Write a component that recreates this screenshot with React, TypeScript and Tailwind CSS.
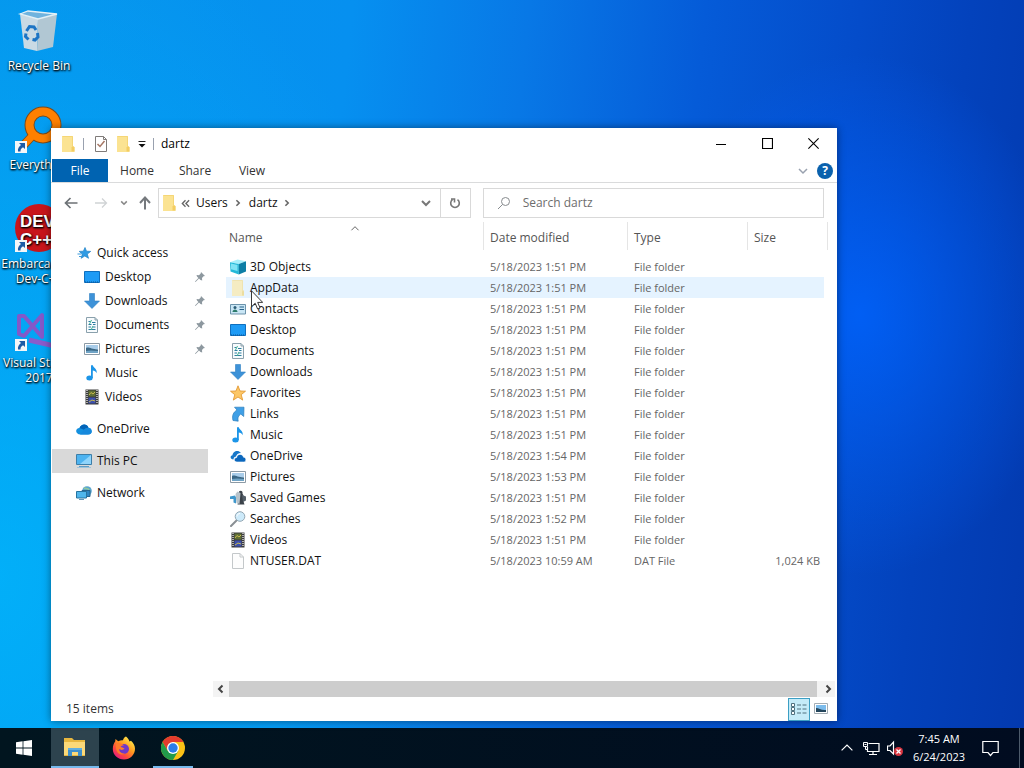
import type { ReactNode } from "react";

type IconName =
  | "folder"
  | "folderFaded"
  | "cube"
  | "contacts"
  | "desktop"
  | "documents"
  | "downloads"
  | "favorites"
  | "links"
  | "music"
  | "onedrive"
  | "onedriveOld"
  | "pictures"
  | "games"
  | "searches"
  | "videos"
  | "file"
  | "quick"
  | "pc"
  | "network";

type FileRow = {
  name: string;
  icon: IconName;
  date: string;
  type?: string;
  size?: string;
  hovered?: boolean;
};

const files: FileRow[] = [
  { name: "3D Objects", icon: "cube", date: "5/18/2023 1:51 PM" },
  { name: "AppData", icon: "folderFaded", date: "5/18/2023 1:51 PM", hovered: true },
  { name: "Contacts", icon: "contacts", date: "5/18/2023 1:51 PM" },
  { name: "Desktop", icon: "desktop", date: "5/18/2023 1:51 PM" },
  { name: "Documents", icon: "documents", date: "5/18/2023 1:51 PM" },
  { name: "Downloads", icon: "downloads", date: "5/18/2023 1:51 PM" },
  { name: "Favorites", icon: "favorites", date: "5/18/2023 1:51 PM" },
  { name: "Links", icon: "links", date: "5/18/2023 1:51 PM" },
  { name: "Music", icon: "music", date: "5/18/2023 1:51 PM" },
  { name: "OneDrive", icon: "onedriveOld", date: "5/18/2023 1:54 PM" },
  { name: "Pictures", icon: "pictures", date: "5/18/2023 1:53 PM" },
  { name: "Saved Games", icon: "games", date: "5/18/2023 1:51 PM" },
  { name: "Searches", icon: "searches", date: "5/18/2023 1:52 PM" },
  { name: "Videos", icon: "videos", date: "5/18/2023 1:51 PM" },
  { name: "NTUSER.DAT", icon: "file", date: "5/18/2023 10:59 AM", type: "DAT File", size: "1,024 KB" },
];

const pinned: { name: string; icon: IconName; pin?: boolean }[] = [
  { name: "Desktop", icon: "desktop", pin: true },
  { name: "Downloads", icon: "downloads", pin: true },
  { name: "Documents", icon: "documents", pin: true },
  { name: "Pictures", icon: "pictures", pin: true },
  { name: "Music", icon: "music" },
  { name: "Videos", icon: "videos" },
];

const glyphs: Record<IconName, ReactNode> = {
  folder: (
    <>
      <path d="M2 0h11v10l1.500 1v5H2z" fill="#fbe392" />
      <path d="M2.500 .5h10v10" fill="none" stroke="#f5d676" />
      <path d="M11.500 15.500v-4l1.500-1.500 1.500 1.500v4z" fill="#f3cd62" />
    </>
  ),
  folderFaded: (
    <>
      <path d="M2 0h11v10l1 1v5H2z" fill="#f5ecc2" />
      <path d="M2.500 .5h10v10" fill="none" stroke="#efe3b0" />
      <path d="M12 15.500v-4l1-1.500 1 1.500v4z" fill="#ebdda0" />
    </>
  ),
  cube: (
    <>
      <path d="M0 3.200L7.500.5 16 2.200 8.800 5z" fill="#a7effb" />
      <path d="M0 3.200L8.800 5v10.500L.5 12.600z" fill="#22b8d8" />
      <path d="M8.800 5L16 2.200v10.200l-7.200 3.100z" fill="#0c7ea6" />
      <path d="M1 4.500l6.500 1.400v6L1 10.300z" fill="#7fe3f5" />
    </>
  ),
  contacts: (
    <>
      <path d="M.5 3.500h15v9.500H.5z" fill="#c9e6f5" stroke="#6c93ab" />
      <circle cx="5" cy="6.500" r="1.500" fill="#2c5d78" />
      <path d="M2.500 11c0-3.500 5-3.500 5 0z" fill="#2c7a6a" />
      <path d="M9.500 6h4.500M9.500 8.500h4.500" stroke="#27618a" strokeWidth="1.200" />
    </>
  ),
  desktop: (
    <>
      <path d="M.5 2.500h15v11H.5z" fill="#1e9bf5" stroke="#0f6fbe" />
      <path d="M1 13h14" stroke="#0b5796" strokeDasharray="1 1" />
    </>
  ),
  documents: (
    <>
      <path d="M2.500.5h8.500l2.500 2.500v12.500h-11z" fill="#f7fbfd" stroke="#8aa0ac" />
      <path d="M11 .5V3h2.500" fill="none" stroke="#8aa0ac" />
      <path d="M4.500 4.500h2M8 5.500h3.500M4.500 7.500h3M9 7.500h2.500M4.500 10h2.500M8.500 10h3M4.500 12.500h7" stroke="#2e7fa0" strokeWidth="1.200" />
      <path d="M7.500 3L5.500 7M9 9l-2 4" stroke="#46b395" />
    </>
  ),
  downloads: <path d="M5.500.5h5V8h5L8 15.500.5 8h5z" fill="#3d92d8" stroke="#2f7fc2" strokeWidth=".6" />,
  favorites: (
    <path
      d="M8 .8l2 5.200 5.500.2-4.300 3.500 1.500 5.400L8 12l-4.700 3.100 1.500-5.400L.5 6.200 6 6z"
      fill="#fcc767"
      stroke="#e39a35"
      strokeWidth=".9"
    />
  ),
  links: (
    <path
      d="M4.500 1.200h9.500l-.3 9.300-2.900-2.500c-2.800 2-3.300 4-2.600 7.200L3 14.500C1.800 9.500 3.300 6.200 7 4z"
      fill="#3f9fe6"
      stroke="#2a7cbc"
      strokeWidth=".7"
    />
  ),
  music: (
    <>
      <ellipse cx="5.500" cy="13" rx="3.200" ry="2.500" fill="#1c95e8" />
      <path d="M7 .3h1.900c.3 2.500 4.700 3.700 3.700 8-.7-2-2.200-2.600-3.800-2.800V13H7z" fill="#1c95e8" />
    </>
  ),
  onedrive: (
    <>
      <path d="M4.500 13.500C-1 13.500-1.200 7.200 3.500 7c1.500-4.500 7.500-4.800 9-.2 4.500.3 4.500 6.700-.5 6.700z" fill="#1490df" />
      <path d="M3.500 7c1.500-4.500 7.500-4.800 9-.2-2-.2-3.500 1-4.500 2z" fill="#0364b8" />
      <path d="M8 8.800c2-2.600 6-2.500 7.300.6 1 2-.3 4.100-3.300 4.100H4z" fill="#1688dc" />
    </>
  ),
  onedriveOld: (
    <>
      <path d="M3.500 11.500C0 11.500-.3 7.800 2.500 7.300 2.500 3.500 8 .8 11 5c-3 .2-4.500 1.500-5 3.500-1.800.3-2.500 1.500-2.500 3z" fill="#1777c9" />
      <path d="M7 14c-3.500 0-3.500-4.300-.3-4.500.3-4 6-4.200 6.800-.3 3.300.3 3 4.800 0 4.800z" fill="#0b67bd" stroke="#fff" strokeWidth=".6" />
    </>
  ),
  pictures: (
    <>
      <path d="M.5 2.500h15v11H.5z" fill="#fff" stroke="#8c9aa5" />
      <path d="M2 4h12v4.500H2z" fill="#a9cdea" />
      <path d="M2 7c3-1.500 5 1.500 12 1.500V12H2z" fill="#3a6785" />
      <path d="M2 10c4-1 8-.5 12 0v2H2z" fill="#6fa3c5" />
    </>
  ),
  games: (
    <>
      <path d="M9 1.500c2-1.500 4-.2 3.500 2l1 2v6l1 3H7.500l1-3.500z" fill="#3b424a" />
      <path d="M5.500 4l2-2.500 3 1.500-1 11-3-1z" fill="#b8c3ca" />
      <path d="M0 6.500l5-1 1 2v6l-2.500-1V9L0 9z" fill="#3f97cc" />
      <path d="M12 5l4 1.500v4L13 12z" fill="#55606a" />
    </>
  ),
  searches: (
    <>
      <path d="M1 15l5.500-5.500" stroke="#8a8f94" strokeWidth="2" strokeLinecap="round" />
      <circle cx="10" cy="5.500" r="4.800" fill="#cdeafa" stroke="#94a7b3" />
      <path d="M7 5.500c0-2 1.500-3 3-3" fill="none" stroke="#fff" />
    </>
  ),
  videos: (
    <>
      <path d="M1.500.5h13v15h-13z" fill="#3a3a3a" />
      <path d="M3 1v14M13 1v14" stroke="#e8e8e8" strokeWidth="1.300" strokeDasharray="1 1" />
      <path d="M4.500 1.500h7v6h-7z" fill="#5f6e35" />
      <path d="M4.500 8.500h7v6h-7z" fill="#3c4fae" />
      <path d="M5 6l2-2.500L9 5l2-2M5 13l3-2 3 1" stroke="#c7b84b" fill="none" />
    </>
  ),
  file: (
    <>
      <path d="M2.500.5H10l3.500 3.500v11.500h-11z" fill="#fdfdfd" stroke="#c4c8ca" />
      <path d="M10 .5V4h3.500" fill="none" stroke="#c4c8ca" />
    </>
  ),
  quick: (
    <>
      <path d="M9 2.500l1.500 3.700 4.200.2-3.400 2.700 1.200 4.200-3.700-2.300-3.700 2.300 1.300-4.200-3.200-2.700 4.200-.2z" fill="#2f9be4" stroke="#1d7fc4" strokeWidth=".7" />
      <path d="M1.500 9h4M3 11.500h3" stroke="#3a9bdc" strokeWidth="1" />
    </>
  ),
  pc: (
    <>
      <path d="M.5 1.500h15v10H.5z" fill="#8fd4fb" stroke="#3d7ea8" />
      <path d="M1 2h14L4 11H1z" fill="#4db3f0" />
      <path d="M3 13.500h10" stroke="#5d9cc6" />
      <path d="M1 14.500h14" stroke="#9fc4dc" />
    </>
  ),
  network: (
    <>
      <circle cx="11" cy="6" r="4.800" fill="#5aa6cf" />
      <path d="M8 3c2 1 4 0 5 2s-1 3 1 4" stroke="#8fc89d" strokeWidth="1.500" fill="none" />
      <path d="M6 5.500h8v6H6z" fill="#2f86c2" stroke="#27658f" />
      <path d="M.5 6.500h10v6.500H.5z" fill="#4fb6ec" stroke="#27739f" />
      <path d="M3 14.500h5" stroke="#6499ba" />
    </>
  ),
};

function Icon({ name }: { name: IconName }) {
  return (
    <svg viewBox="0 0 16 16" className="size-4 shrink-0" aria-hidden="true">
      {glyphs[name]}
    </svg>
  );
}

function Chevron({ d, className }: { d: string; className: string }) {
  return (
    <svg viewBox="0 0 10 10" className={className} fill="none" stroke="currentColor" aria-hidden="true">
      <path d={d} />
    </svg>
  );
}

function Pin() {
  return (
    <svg viewBox="0 0 12 12" className="size-3 shrink-0" aria-hidden="true">
      <path d="M7 1l4 4-1.500.3-1.500 1.700.2 2.500L6.500 9 5 7.600 1.500 11l-.5-.5L4.400 7 3 5.500 2.500 4l2.500.2L6.700 2.500z" fill="#8d989f" />
    </svg>
  );
}

function DesktopIcon({ label, children, shortcut = true }: { label: string; children: ReactNode; shortcut?: boolean }) {
  return (
    <button
      type="button"
      className="flex h-[99px] w-[78px] flex-col items-center pt-1.5 text-center text-[12px] leading-[15px] text-white [text-shadow:1px_1px_2px_#000,0_1px_2px_#000]"
    >
      <span className="relative mb-1 block size-12">
        <svg viewBox="0 0 48 48" className="size-12" aria-hidden="true">
          {children}
        </svg>
        {shortcut && (
          <svg viewBox="0 0 12 12" className="absolute bottom-0 left-0 size-3" aria-hidden="true">
            <path d="M0 0h12v12H0z" fill="#f4f6f8" />
            <path d="M4 2h6v6L8 6.300C6 7.500 5.500 8.500 5.500 10.500H3C2.500 7.500 4 5.500 6 4z" fill="#1d5aa5" />
          </svg>
        )}
      </span>
      {label}
    </button>
  );
}

function Desktop() {
  return (
    <div className="flex flex-col">
      <DesktopIcon label="Recycle Bin" shortcut={false}>
        <path d="M5 8l18 5-1 32-13-3z" fill="#c9dae4" />
        <path d="M23 13l19-5-4 33-16 4z" fill="#b1c7d3" />
        <path d="M5 8l8-3 29 3-19 5z" fill="#6fb3de" stroke="#e3f0f6" strokeWidth="1.300" />
        <path d="M11.500 25l3-4.500 4.500.5 2 3M22.500 27l.5 4-3 3-2.500-.5M13.500 33.500l-3-3 .5-3" fill="none" stroke="#1c74c4" strokeWidth="3" />
      </DesktopIcon>
      <DesktopIcon label="Everything">
        <circle cx="28" cy="20" r="13.500" fill="none" stroke="#7c4a1a" strokeWidth="10" />
        <path d="M19 29L6 43" stroke="#7c4a1a" strokeWidth="8.500" />
        <circle cx="28" cy="20" r="13.500" fill="none" stroke="#ff8000" strokeWidth="8" />
        <path d="M20 28L6 43" stroke="#ff8000" strokeWidth="7" />
      </DesktopIcon>
      <DesktopIcon label="Embarcadero Dev-C++">
        <circle cx="24" cy="24" r="24" fill="#c8151b" />
        <text fill="#fff" fontFamily="Liberation Sans, sans-serif" fontWeight="700" fontSize="17">
          <tspan x="5" y="23">DEV</tspan>
          <tspan x="5" y="41">C++</tspan>
        </text>
      </DesktopIcon>
      <DesktopIcon label="Visual Studio 2017">
        <path d="M4 13v18l5 2L27 12v22L9 13z" fill="none" stroke="#8359c8" strokeWidth="4" strokeLinejoin="round" />
        <path d="M14 37l34 8V5" fill="none" stroke="#8a5bcb" strokeWidth="5" />
      </DesktopIcon>
    </div>
  );
}

function TitleBar() {
  return (
    <header className="flex h-[31px] shrink-0 items-center pl-[9px]">
      <Icon name="folder" />
      <span className="ml-[7px] h-3 w-px bg-gray-400" />
      <button type="button" aria-label="Properties" className="ml-[9px]">
        <svg viewBox="0 0 16 16" className="size-4" fill="none" aria-hidden="true">
          <path d="M2.500.5h8l3 3v12h-11z" fill="#fff" stroke="#7f7b79" />
          <path d="M10.500.5v3h3" stroke="#7f7b79" />
          <path d="M4.500 8l2.500 2.500L11.500 5" stroke="#a67764" strokeWidth="1.500" />
        </svg>
      </button>
      <button type="button" aria-label="New folder" className="ml-[6px]">
        <Icon name="folder" />
      </button>
      <button type="button" aria-label="Customize Quick Access Toolbar" className="ml-[7px]">
        <svg viewBox="0 0 8 8" className="size-2" aria-hidden="true">
          <path d="M.5 1.500h7" stroke="#222" />
          <path d="M.5 4h7L4 7.500z" fill="#111" />
        </svg>
      </button>
      <span className="ml-[7px] h-3 w-px bg-gray-400" />
      <h1 className="ml-[7px] text-black">dartz</h1>
      <div className="mr-px ml-auto flex text-black">
        <button type="button" aria-label="Minimize" className="grid h-[31px] w-[46px] place-items-center">
          <Chevron d="M0 5.500h10" className="size-[10px]" />
        </button>
        <button type="button" aria-label="Maximize" className="grid h-[31px] w-[46px] place-items-center">
          <Chevron d="M.5.5h9v9h-9z" className="size-[11px]" />
        </button>
        <button type="button" aria-label="Close" className="grid h-[31px] w-[46px] place-items-center">
          <Chevron d="M.3.3l9.400 9.400M9.700.3L.3 9.700" className="size-[11px]" />
        </button>
      </div>
    </header>
  );
}

function Ribbon() {
  return (
    <nav className="flex h-6 shrink-0 items-stretch border-b border-[#dadbdc] text-[#333]">
      <button type="button" className="ml-px w-14 bg-[#0063b1] text-white">File</button>
      <button type="button" className="w-[58px]">Home</button>
      <button type="button" className="w-[58px]">Share</button>
      <button type="button" className="w-14">View</button>
      <button type="button" aria-label="Expand the Ribbon" className="ml-auto text-gray-400">
        <Chevron d="M1 3l4 4 4-4" className="size-[10px] stroke-[1.5]" />
      </button>
      <button
        type="button"
        aria-label="Help"
        className="mr-1 ml-[9px] grid size-4 place-items-center self-center rounded-full bg-[#0a61ad] text-[12px] leading-4 font-bold text-white"
      >
        ?
      </button>
    </nav>
  );
}

function AddressRow() {
  return (
    <div className="flex h-[35px] shrink-0 items-end pr-[13px] text-[#666]">
      <div className="flex h-[30px] w-[107px] shrink-0 items-center pl-[13px]">
        <button type="button" aria-label="Back">
          <svg viewBox="0 0 14 12" className="h-3 w-[14px]" fill="none" stroke="#6d7276" strokeWidth="1.700">
            <path d="M13.500 6H1.500M6.500 1l-5 5 5 5" />
          </svg>
        </button>
        <button type="button" aria-label="Forward" className="ml-4">
          <svg viewBox="0 0 14 12" className="h-3 w-[14px]" fill="none" stroke="#d0d3d5" strokeWidth="1.300">
            <path d="M1 6h11.500M8 1.500L12.500 6 8 10.500" />
          </svg>
        </button>
        <button type="button" aria-label="Recent locations" className="ml-3">
          <Chevron d="M1.500 3L5 6.500 8.500 3" className="size-2 stroke-2 text-[#888]" />
        </button>
        <button type="button" aria-label="Up" className="ml-[11px]">
          <svg viewBox="0 0 12 14" className="h-[14px] w-3" fill="none" stroke="#75797d" strokeWidth="2">
            <path d="M6 13.500V1.500M1 7l5-5.500L11 7" />
          </svg>
        </button>
      </div>
      <div className="flex h-[30px] min-w-0 flex-[311] items-center border border-[#d9d9d9] pl-[2px]">
        <Icon name="folder" />
        <Chevron d="M5 1.500L1.500 5 5 8.500M9 1.500L5.500 5 9 8.500" className="ml-1 size-[9px] stroke-[1.5]" />
        <button type="button" className="ml-[6px] text-[#111]">Users</button>
        <Chevron d="M3 1.500L6.500 5 3 8.500" className="ml-[6px] size-2 stroke-2" />
        <button type="button" className="ml-[7px] text-[#111]">dartz</button>
        <Chevron d="M3 1.500L6.500 5 3 8.500" className="ml-[5px] size-2 stroke-2" />
        <button type="button" aria-label="Previous locations" className="mr-[9px] ml-auto">
          <Chevron d="M1 3l4 4 4-4" className="size-[10px] stroke-2 text-[#777]" />
        </button>
        <button
          type="button"
          aria-label="Refresh"
          className="grid h-[28px] w-[30px] place-items-center border-l border-[#d9d9d9]"
        >
          <svg viewBox="0 0 12 12" className="size-3" fill="none" stroke="#777" strokeWidth="1.600" aria-hidden="true">
            <path d="M8.500 2.700a4.300 4.300 0 1 1-5 0M2 2h3.500v3.500" />
          </svg>
        </button>
      </div>
      <label className="ml-3 flex h-[30px] min-w-0 flex-[342] items-center border border-[#d9d9d9]">
        <svg viewBox="0 0 14 14" className="ml-[13px] size-[14px] shrink-0" fill="none" stroke="#878b8e" aria-hidden="true">
          <circle cx="8.500" cy="5.500" r="4" />
          <path d="M5.500 8.500L1 13" />
        </svg>
        <input
          type="search"
          aria-label="Search dartz"
          placeholder="Search dartz"
          className="ml-3 w-full min-w-0 bg-transparent outline-none placeholder:text-[#6d6d6d]"
        />
      </label>
    </div>
  );
}

function NavPane() {
  return (
    <nav className="w-[162px] shrink-0 pt-[23px] text-[#111]">
      <a href="#quick" className="flex h-6 items-center gap-[5px] pl-[25px]">
        <Icon name="quick" />
        Quick access
      </a>
      <ul>
        {pinned.map((item) => (
          <li key={item.name}>
            <a href="#folder" className="flex h-6 items-center gap-[5px] pr-[7px] pl-[33px]">
              <Icon name={item.icon} />
              <span className="flex-1">{item.name}</span>
              {item.pin && <Pin />}
            </a>
          </li>
        ))}
      </ul>
      <a href="#onedrive" className="mt-2 flex h-6 items-center gap-[5px] pl-[25px]">
        <Icon name="onedrive" />
        OneDrive
      </a>
      <a href="#pc" className="mt-2 mr-[5px] ml-px flex h-6 items-center gap-[5px] bg-[#d9d9d9] pl-6">
        <Icon name="pc" />
        This PC
      </a>
      <a href="#network" className="mt-2 flex h-6 items-center gap-[5px] pl-[25px]">
        <Icon name="network" />
        Network
      </a>
    </nav>
  );
}

function FileTable() {
  return (
    <div className="min-h-0 flex-1 overflow-hidden pr-[9px] pl-[13px]">
      <table className="w-full table-fixed border-separate border-spacing-0 text-left">
        <colgroup>
          <col />
          <col className="w-[144px]" />
          <col className="w-[120px]" />
          <col className="w-[80px]" />
        </colgroup>
        <thead>
          <tr className="h-[34px] align-top text-[#555]">
            <th scope="col" className="relative p-0 font-normal">
              <span className="block h-7 border-r border-[#e5e5e5] pl-[3px] leading-8">Name</span>
              <span className="absolute top-0.5 left-1/2 -translate-x-1/2">
                <Chevron d="M1 7l4-4 4 4" className="size-[9px]" />
              </span>
            </th>
            <th scope="col" className="p-0 font-normal">
              <span className="block h-7 border-r border-[#e5e5e5] pl-[6px] leading-8">Date modified</span>
            </th>
            <th scope="col" className="p-0 font-normal">
              <span className="block h-7 border-r border-[#e5e5e5] pl-[6px] leading-8">Type</span>
            </th>
            <th scope="col" className="p-0 font-normal">
              <span className="block h-7 border-r border-[#e5e5e5] pl-[6px] leading-8">Size</span>
            </th>
          </tr>
        </thead>
        <tbody>
          {files.map((f) => (
            <tr key={f.name} className={`h-[21px] text-[11px] text-[#666] ${f.hovered ? "[&>td]:bg-[#e5f3ff]" : ""}`}>
              <td className="p-0 pl-1 text-[12px] text-[#111]">
                <span className="flex items-center gap-1">
                  <Icon name={f.icon} />
                  {f.name}
                </span>
              </td>
              <td className="p-0 pl-[6px]">{f.date}</td>
              <td className="p-0 pl-[6px]">{f.type ?? "File folder"}</td>
              <td className="border-r-4 border-transparent bg-clip-padding p-0 pr-1 text-right">{f.size}</td>
            </tr>
          ))}
        </tbody>
      </table>
    </div>
  );
}

function Explorer() {
  return (
    <main className="absolute top-32 right-[187px] bottom-[7px] left-[51px] flex flex-col bg-white shadow-[0_0_8px_rgba(0,0,0,0.45)]">
      <TitleBar />
      <Ribbon />
      <AddressRow />
      <div className="flex min-h-0 flex-1">
        <NavPane />
        <section className="flex min-w-0 flex-1 flex-col pt-1">
          <FileTable />
          <div className="mr-[2px] flex h-4 shrink-0 items-stretch bg-[#f3f3f3] text-[#444]">
            <button type="button" aria-label="Scroll left" className="grid w-4 place-items-center">
              <Chevron d="M6.500 1.500L3 5l3.500 3.500" className="size-[10px] stroke-2" />
            </button>
            <div className="flex-1 bg-[#cdcdcd]" />
            <button type="button" aria-label="Scroll right" className="grid w-[18px] place-items-center pl-1">
              <Chevron d="M3.500 1.500L7 5 3.500 8.500" className="size-[10px] stroke-2" />
            </button>
          </div>
        </section>
      </div>
      <footer className="flex h-6 shrink-0 items-center pl-[15px] text-[#333]">
        15 items
        <button
          type="button"
          aria-label="Details view"
          className="ml-auto grid h-[23px] w-[22px] place-items-center border border-[#3c9fc4] bg-[#c5ebf8]"
        >
          <svg viewBox="0 0 16 14" className="h-[14px] w-4" fill="none" stroke="#50707e" aria-hidden="true">
            <path d="M.5 1.500h3v3h-3zM.5 5.500h3v3h-3zM.5 9.500h3v3h-3z" fill="#fff" />
            <path d="M6 3h4M11.500 3h4M6 7h4M11.500 7h4M6 11h4M11.500 11h4" />
          </svg>
        </button>
        <button type="button" aria-label="Large thumbnails view" className="mr-[9px] ml-1">
          <svg viewBox="0 0 14 12" className="h-3 w-[14px]" aria-hidden="true">
            <path d="M.5.5h13v10H.5z" fill="#fff" stroke="#a3adb4" />
            <path d="M2 2h10v7H2z" fill="#7cbcec" />
            <path d="M2 5c3 0 5 2.500 10 2v2H2z" fill="#24465c" />
          </svg>
        </button>
      </footer>
    </main>
  );
}

function Taskbar() {
  return (
    <footer className="flex h-10 shrink-0 items-stretch bg-linear-to-r from-[#01151f] to-[#010c20] text-white">
      <button type="button" aria-label="Start" className="grid w-12 place-items-center">
        <svg viewBox="0 0 16 16" className="size-4" fill="#fff" aria-hidden="true">
          <path d="M0 2.200L6.600 1.300v6.300H0zM7.400 1.200L16 0v7.600H7.400zM0 8.400h6.600v6.300L0 13.800zM7.400 8.400H16V16l-8.600-1.200z" />
        </svg>
      </button>
      <button
        type="button"
        aria-label="File Explorer"
        className="ml-[3px] grid w-12 place-items-center border-b-2 border-[#76b9ed] bg-[#2d434e]"
      >
        <svg viewBox="0 0 24 24" className="size-6" aria-hidden="true">
          <path d="M1 3h8l2 2h11v16H1z" fill="#e8b73f" />
          <path d="M1 7h21v13H1z" fill="#fcd978" />
          <path d="M5 13h14v8h-4v-4H9v4H5z" fill="#3f8fcb" />
          <path d="M5 13h14v2H5z" fill="#61aede" />
        </svg>
      </button>
      <button type="button" aria-label="Firefox" className="ml-px grid w-12 place-items-center">
        <svg viewBox="0 0 24 24" className="size-6" aria-hidden="true">
          <defs>
            <linearGradient id="fox" x1="0.9" y1="0.100" x2="0.200" y2="1">
              <stop offset="0" stopColor="#fff44f" />
              <stop offset="0.400" stopColor="#ff9a1f" />
              <stop offset="0.700" stopColor="#ff4a3d" />
              <stop offset="1" stopColor="#e31587" />
            </linearGradient>
          </defs>
          <path
            d="M14 .5c2 1.500 3 3.200 3.500 5l1.500-.7c2.500 2.200 4 5 4 8C23 19 18 23.500 12 23.500S.8 19 .8 13C.8 9.500 2 7 3.200 5.500L3.500 3l2.700 2.200C8 4.200 9.500 4 11 4.200 11.300 2.500 12.500 1 14 .5z"
            fill="url(#fox)"
          />
          <circle cx="12" cy="13" r="5" fill="#7139c9" />
          <path d="M4 8c3-2 6-.5 8 1.500-2-.1-3 .5-3.500 1.500 1.500 0 2.500 1 4 1.500C11 14.500 8 14 7 13c0 3 3 5 6 4.500-5 3-10-1-9-9.500z" fill="#ff7a2b" />
        </svg>
      </button>
      <button type="button" aria-label="Chrome" className="relative ml-px grid w-12 place-items-center">
        <svg viewBox="0 0 24 24" className="size-6" aria-hidden="true">
          <circle cx="12" cy="12" r="12" fill="#fbc116" />
          <path d="M1.600 6A12 12 0 0 1 22.400 6H12L6.800 15z" fill="#e33b2e" />
          <path d="M1.600 6A12 12 0 0 0 12 24l5.200-9-10.400 0z" fill="#229b4b" />
          <circle cx="12" cy="12" r="6" fill="#fff" />
          <circle cx="12" cy="12" r="4.700" fill="#2b7de9" />
        </svg>
        <span className="absolute inset-x-1 bottom-0 h-[2px] bg-[#76b9ed]" />
      </button>

      <button type="button" aria-label="Show hidden icons" className="ml-auto">
        <Chevron d="M.5 7L5 2.500 9.500 7" className="size-3" />
      </button>
      <button type="button" aria-label="Network" className="ml-[10px]">
        <svg viewBox="0 0 17 15" className="h-[15px] w-[17px]" fill="none" stroke="#fff" aria-hidden="true">
          <path d="M5.500 2.500h10.500v8H4.500V6M10 10.500v3M6 13.500h8" strokeWidth="1.200" />
          <path d="M.5 1.500h4v4h-4zM2.500 5.500v3h2M1.500 3.500h2" />
        </svg>
      </button>
      <button type="button" aria-label="Volume muted" className="ml-[7px]">
        <svg viewBox="0 0 16 16" className="size-4" fill="none" aria-hidden="true">
          <path d="M.5 6h2.500l3.500-4v12L3 10.500H.5z" stroke="#fff" strokeWidth="1.200" />
          <circle cx="11.500" cy="11.500" r="4.500" fill="#d83540" />
          <path d="M9.500 9.500l4 4M13.500 9.500l-4 4" stroke="#fff" strokeWidth="1.300" />
        </svg>
      </button>
      <button type="button" className="ml-[9px] w-[54px] text-[11px] leading-[18px] whitespace-nowrap">
        7:45 AM
        <br />
        6/24/2023
      </button>
      <button type="button" aria-label="Notifications" className="ml-4">
        <svg viewBox="0 0 17 17" className="size-[17px]" fill="none" stroke="#fff" strokeWidth="1.200" aria-hidden="true">
          <path d="M.8 1.500h15.400v11H11L8.500 15.500 6 12.500H.8z" />
        </svg>
      </button>
      <button type="button" aria-label="Show desktop" className="ml-5 w-[5px] border-l border-[#4d5b6b]" />
    </footer>
  );
}

export default function App() {
  return (
    <div className="flex h-screen flex-col overflow-hidden bg-[radial-gradient(ellipse_20%_34%_at_84%_41%,rgba(0,100,255,0.8),transparent),radial-gradient(ellipse_45%_90%_at_0%_75%,rgba(0,190,255,0.65),transparent),linear-gradient(96deg,#0594ec_0%,#0690f0_32%,#0878e6_48%,#055bd8_64%,#044cca_78%,#0342bc_88%,#0339ae_100%)] font-['Open_Sans','Noto_Sans',sans-serif] text-[12px] leading-4">
      <div className="relative min-h-0 flex-1">
        <Desktop />
        <Explorer />
        <svg viewBox="0 0 12 20" className="absolute top-[290px] left-[251px] h-5 w-3" aria-hidden="true">
          <path d="M.5.8v16l3.700-3.600 2.400 5.800 2.500-1-2.400-5.600h5z" fill="#fff" stroke="#222" strokeWidth=".9" />
        </svg>
      </div>
      <Taskbar />
    </div>
  );
}
